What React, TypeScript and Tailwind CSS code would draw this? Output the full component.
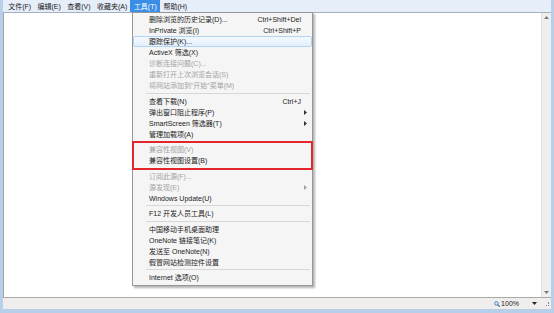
import React from "react";

/* ─── Types ─────────────────────────────────────────────── */
type Entry =
  | { kind: "item"; label: string; shortcut?: string; sub?: boolean; disabled?: boolean; hover?: boolean }
  | { kind: "sep" };

/* ─── Static data ───────────────────────────────────────── */
const MENUBAR = ["文件(F)", "编辑(E)", "查看(V)", "收藏夹(A)", "工具(T)", "帮助(H)"];

const TOP: Entry[] = [
  { kind: "item", label: "删除浏览的历史记录(D)...", shortcut: "Ctrl+Shift+Del" },
  { kind: "item", label: "InPrivate 浏览(I)", shortcut: "Ctrl+Shift+P" },
  { kind: "item", label: "跟踪保护(K)...", hover: true },
  { kind: "item", label: "ActiveX 筛选(X)" },
  { kind: "item", label: "诊断连接问题(C)...", disabled: true },
  { kind: "item", label: "重新打开上次浏览会话(S)", disabled: true },
  { kind: "item", label: "将网站添加到“开始”菜单(M)", disabled: true },
  { kind: "sep" },
  { kind: "item", label: "查看下载(N)", shortcut: "Ctrl+J" },
  { kind: "item", label: "弹出窗口阻止程序(P)", sub: true },
  { kind: "item", label: "SmartScreen 筛选器(T)", sub: true },
  { kind: "item", label: "管理加载项(A)" },
  { kind: "sep" },
];

const COMPAT: Entry[] = [
  { kind: "item", label: "兼容性视图(V)", disabled: true },
  { kind: "item", label: "兼容性视图设置(B)" },
];

const BOTTOM: Entry[] = [
  { kind: "sep" },
  { kind: "item", label: "订阅此源(F)...", disabled: true },
  { kind: "item", label: "源发现(E)", disabled: true, sub: true },
  { kind: "item", label: "Windows Update(U)" },
  { kind: "sep" },
  { kind: "item", label: "F12 开发人员工具(L)" },
  { kind: "sep" },
  { kind: "item", label: "中国移动手机桌面助理" },
  { kind: "item", label: "OneNote 链接笔记(K)" },
  { kind: "item", label: "发送至 OneNote(N)" },
  { kind: "item", label: "假冒网站检测控件设置" },
  { kind: "sep" },
  { kind: "item", label: "Internet 选项(O)" },
];

/* ─── Menu row ──────────────────────────────────────────── */
function Row({ e }: { e: Entry }) {
  if (e.kind === "sep") {
    return (
      <div className="h-[4.5px] flex flex-col justify-center ml-[13px] mr-[2px]">
        <div className="h-px bg-[#d7d7d7]" />
      </div>
    );
  }
  const color = e.disabled ? "text-[#a3a3a3]" : "text-[#1c1c1c]";
  return (
    <div
      className={
        e.hover
          ? "h-[11px] flex items-center pl-[15px] pr-[2px] border border-[#b3d3f5] rounded-[2px] bg-gradient-to-b from-[#f3f8fe] to-[#e4effb]"
          : "h-[11px] flex items-center pl-[16px] pr-[3px]"
      }
    >
      <span className={`flex-1 whitespace-nowrap ${color}`}>{e.label}</span>
      {e.shortcut && <span className={`whitespace-nowrap ${color}`}>{e.shortcut}</span>}
      <span className="w-[8px] flex justify-center">
        {e.sub && (
          <svg width="3" height="5" viewBox="0 0 3 5">
            <path d="M0 0L3 2.5L0 5Z" fill={e.disabled ? "#a3a3a3" : "#333"} />
          </svg>
        )}
      </span>
    </div>
  );
}

/* ─── App ───────────────────────────────────────────────── */
export default function App() {
  return (
    <div
      className="relative w-[554px] h-[313px] overflow-hidden bg-[#b7cfe9] px-[3px] pb-[4px] flex flex-col text-[7px] leading-none"
      style={{ fontFamily: '"Liberation Sans", "Noto Sans CJK SC", sans-serif' }}
    >
      {/* ── Menu bar ── */}
      <div className="h-[13px] flex items-stretch bg-[#e6eef9] border-b border-[#a7b1bd] pl-[2px]">
        {MENUBAR.map((m) => (
          <span
            key={m}
            className={
              m === "工具(T)"
                ? "flex items-center px-[3.4px] bg-[#3a8ee6] text-white"
                : "flex items-center px-[3.2px] text-[#1c1c1c]"
            }
          >
            {m}
          </span>
        ))}
      </div>

      {/* ── Page area ── */}
      <div className="flex-1 flex border-l border-[#9fa3a8]">
        <div className="flex-1 bg-white" />
        <div className="w-[10px] bg-[#eeeeee] border-l border-[#e2e2e2] flex flex-col items-center justify-between py-[3px]">
          <svg width="5" height="3" viewBox="0 0 5 3">
            <path d="M0 3L2.5 0L5 3Z" fill="#7a7a7a" />
          </svg>
          <svg width="5" height="3" viewBox="0 0 5 3">
            <path d="M0 0L2.5 3L5 0Z" fill="#7a7a7a" />
          </svg>
        </div>
      </div>

      {/* ── Status bar ── */}
      <div className="h-[12px] bg-[#f0eeec] border-t border-[#a9a9a9] flex items-center justify-end pr-[2px] text-[#1c1c1c]">
        <svg width="6" height="6" viewBox="0 0 6 6" className="mr-px">
          <circle cx="2.4" cy="2.4" r="1.8" fill="#cfe3f7" stroke="#3b73b9" strokeWidth="0.8" />
          <path d="M3.7 3.7L5.7 5.7" stroke="#3b5f8f" strokeWidth="1.1" />
        </svg>
        <span>100%</span>
        <svg width="5" height="3" viewBox="0 0 5 3" className="ml-[13px] mr-[9px]">
          <path d="M0 0L2.5 3L5 0Z" fill="#222" />
        </svg>
        <span className="w-[3px] h-[4px] border-r border-b border-dotted border-[#888]" />
      </div>

      {/* ── Tools dropdown ── */}
      <div className="absolute left-[132px] top-[12px] w-[181px] bg-[#f5f5f5] border border-[#979797] shadow-[2px_2px_2px_rgba(0,0,0,0.3)] pt-px pb-[2px]">
        {TOP.map((e, i) => (
          <Row key={`t${i}`} e={e} />
        ))}
        <div className="relative">
          {COMPAT.map((e, i) => (
            <Row key={`c${i}`} e={e} />
          ))}
          <span className="absolute -top-[3px] -bottom-[4px] -left-px -right-px border-2 border-[#e4252c]" />
        </div>
        {BOTTOM.map((e, i) => (
          <Row key={`b${i}`} e={e} />
        ))}
      </div>
    </div>
  );
}
